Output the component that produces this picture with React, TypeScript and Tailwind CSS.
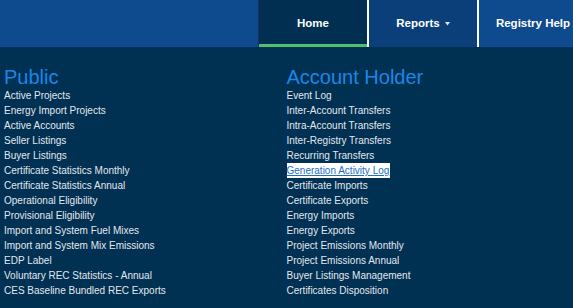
const publicLinks = [
  "Active Projects",
  "Energy Import Projects",
  "Active Accounts",
  "Seller Listings",
  "Buyer Listings",
  "Certificate Statistics Monthly",
  "Certificate Statistics Annual",
  "Operational Eligibility",
  "Provisional Eligibility",
  "Import and System Fuel Mixes",
  "Import and System Mix Emissions",
  "EDP Label",
  "Voluntary REC Statistics - Annual",
  "CES Baseline Bundled REC Exports",
];

const accountLinks = [
  "Event Log",
  "Inter-Account Transfers",
  "Intra-Account Transfers",
  "Inter-Registry Transfers",
  "Recurring Transfers",
  "Generation Activity Log",
  "Certificate Imports",
  "Certificate Exports",
  "Energy Imports",
  "Energy Exports",
  "Project Emissions Monthly",
  "Project Emissions Annual",
  "Buyer Listings Management",
  "Certificates Disposition",
];

function LinkColumn({ title, links, active }: { title: string; links: string[]; active?: string }) {
  return (
    <div>
      <h2 className="text-[20px] leading-[22px] text-[#1b87e6]">{title}</h2>
      <ul>
        {links.map((l) => (
          <li key={l} className="h-[15px] text-[10px] leading-[15px]">
            {l === active ? (
              <a href="#" className="inline-block bg-white pr-[1px] text-[#1d6ec2] underline">
                {l}
              </a>
            ) : (
              <a href="#" className="text-[#e3e8ef]">
                {l}
              </a>
            )}
          </li>
        ))}
      </ul>
    </div>
  );
}

export default function App() {
  return (
    <div className="h-[308px] overflow-hidden bg-[#003052] font-['Liberation_Sans',Arial,sans-serif]">
      <nav className="flex h-[47px] overflow-hidden bg-[#0e4b8e]">
        <div className="w-[258px] shrink-0" />
        <a
          href="#"
          className="relative flex w-[109px] shrink-0 items-center justify-center border-l border-[#1c2a6b] bg-[#002f52] text-[11.5px] font-bold text-white"
        >
          Home
          <span className="absolute bottom-0 left-0 right-0 h-[3px] bg-[#4cc26c]" />
        </a>
        <div className="w-[2px] shrink-0 bg-white" />
        <a
          href="#"
          className="flex w-[108px] shrink-0 items-center justify-center gap-[5px] bg-[#0b3f7a] text-[11.5px] font-bold text-white"
        >
          Reports
          <svg width="5" height="4" viewBox="0 0 5 4" className="mt-[1px]">
            <path d="M0 0h5L2.5 3.5z" fill="#dfe6f0" />
          </svg>
        </a>
        <div className="w-[2px] shrink-0 bg-white" />
        <a
          href="#"
          className="flex w-[108px] shrink-0 items-center justify-center text-[11.5px] font-bold text-white"
        >
          Registry Help
        </a>
      </nav>
      <main className="grid grid-cols-2 px-1 pt-[19px]">
        <LinkColumn title="Public" links={publicLinks} />
        <LinkColumn title="Account Holder" links={accountLinks} active="Generation Activity Log" />
      </main>
    </div>
  );
}
